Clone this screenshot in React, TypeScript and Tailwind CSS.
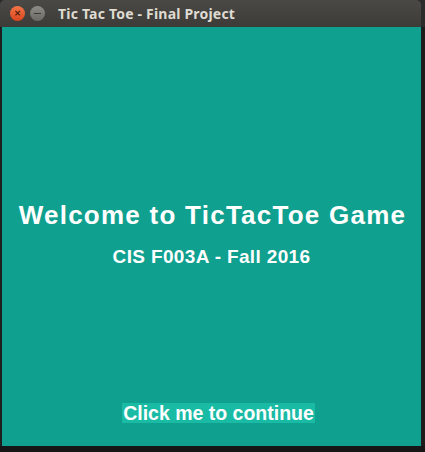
export default function App() {
  return (
    <div className="w-[425px] h-[452px] bg-[#2b2b2b] flex flex-col overflow-hidden">
      {/* title bar */}
      <div className="h-[27px] w-[421px] rounded-t-[5px] bg-gradient-to-b from-[#4a4945] to-[#3c3b37] flex items-center pl-[10px] shrink-0">
        <div className="w-[15px] h-[15px] rounded-full bg-gradient-to-b from-[#f37548] to-[#d9441a] flex items-center justify-center text-[#4a1a0a] text-[9px] leading-none font-bold font-['DejaVu_Sans',sans-serif]">
          ×
        </div>
        <div className="ml-[5px] w-[15px] h-[15px] rounded-full bg-gradient-to-b from-[#8e8c87] to-[#6b6964] flex items-center justify-center">
          <div className="w-[7px] h-[1.5px] bg-[#3c3b37]" />
        </div>
        <span className="ml-[13px] text-[14px] font-bold text-[#dfdbd2] font-['Noto_Sans',sans-serif] tracking-[0.2px]">
          Tic Tac Toe - Final Project
        </span>
      </div>
      <div className="flex">
        <div className="w-[2px] h-[419px] bg-[#1e1e1e]" />
        {/* content */}
        <div className="w-[419px] h-[419px] bg-[#0fa08f] flex flex-col items-center font-['Liberation_Sans',Arial,sans-serif] text-white font-bold">
          <div className="mt-[172px] ml-[2px] text-[26px] leading-[32px] tracking-[1.25px]">Welcome to TicTacToe Game</div>
          <div className="mt-[15px] text-[19px] leading-[22px] tracking-[0.35px]">CIS F003A - Fall 2016</div>
          <div className="mt-[135px] ml-[14px] bg-[#1abba4] px-[1px] text-[19.5px] leading-[20px]">Click me to continue</div>
        </div>
        <div className="w-[4px] h-[419px] bg-[#1c1c1c]" />
      </div>
      <div className="h-[6px] bg-[#161616]" />
    </div>
  );
}
